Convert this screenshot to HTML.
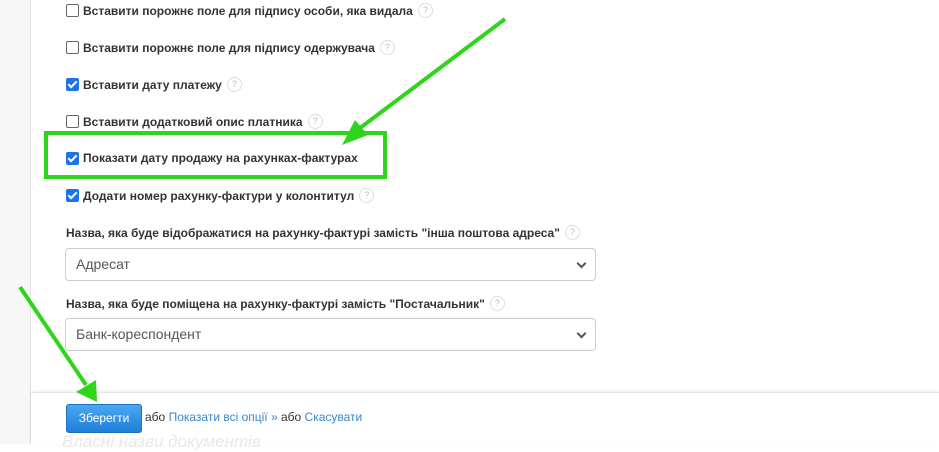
<!DOCTYPE html>
<html><head><meta charset="utf-8"><style>
body{margin:0;width:939px;height:444px;overflow:hidden;background:#fff;font-family:"Liberation Sans",Arial,sans-serif;position:relative}
.side{position:absolute;left:0;top:0;width:30px;height:444px;background:#f7f7f7;border-right:1px solid #e3e3e3}
.row{position:absolute;left:66px;font-size:12px;font-weight:bold;color:#333;white-space:nowrap;display:flex;align-items:center}
.cb{width:11px;height:11px;border:1px solid #666;border-radius:2px;margin-right:4px;background:#fff;display:inline-block;box-sizing:content-box}
.cb.on{background:#1a73e8;border-color:#1a73e8;position:relative}
.cb.on:after{content:"";position:absolute;left:3px;top:0px;width:3px;height:7px;border:solid #fff;border-width:0 2px 2px 0;transform:rotate(45deg)}
.q{display:inline-block;width:13px;height:13px;border:1px solid #ddd;border-radius:50%;font-size:9px;color:#bbb;text-align:center;line-height:13px;font-weight:normal;margin-left:5px}
.lbl{position:absolute;left:66px;font-size:12px;font-weight:bold;color:#333;white-space:nowrap;display:flex;align-items:center}
.sel{position:absolute;left:65px;width:531px;height:33px;border:1px solid #ccc;border-radius:4px;box-sizing:border-box;font-size:14px;color:#555;padding:0 0 0 10px;line-height:31px}
.sel:after{content:"";position:absolute;right:10px;top:11px;width:5px;height:5px;border:solid #555;border-width:0 2px 2px 0;transform:rotate(45deg)}
.foot{position:absolute;left:31px;top:392px;width:908px;height:52px;background:#fff;border-top:1px solid #e6e6e6;box-shadow:0 -1px 3px rgba(0,0,0,.08)}
.btn{position:absolute;left:66px;top:404px;width:76px;height:29px;border-radius:3px;background:linear-gradient(#4aa8f0,#1e7fd8);border:1px solid #1a6fc0;box-sizing:border-box;color:#fff;font-size:12px;text-align:center;line-height:27px}
.ft{position:absolute;left:145px;top:410px;font-size:12px;color:#333;white-space:nowrap}
.ft a{color:#3a86c8;text-decoration:none}
.ghost{position:absolute;left:62px;top:432px;font-size:17px;font-style:italic;color:#e8e8e8}
</style></head><body>
<div class="side"></div>
<div class="row" style="top:3px"><span class="cb"></span>Вставити порожнє поле для підпису особи, яка видала<span class="q">?</span></div>
<div class="row" style="top:40px"><span class="cb"></span>Вставити порожнє поле для підпису одержувача<span class="q">?</span></div>
<div class="row" style="top:77px"><span class="cb on"></span>Вставити дату платежу<span class="q">?</span></div>
<div class="row" style="top:114px"><span class="cb"></span>Вставити додатковий опис платника<span class="q">?</span></div>
<div class="row" style="top:151px"><span class="cb on"></span>Показати дату продажу на рахунках-фактурах</div>
<div class="row" style="top:188px"><span class="cb on"></span>Додати номер рахунку-фактури у колонтитул<span class="q">?</span></div>
<div class="lbl" style="top:225px">Назва, яка буде відображатися на рахунку-фактурі замість "інша поштова адреса"<span class="q">?</span></div>
<div class="sel" style="top:248px">Адресат</div>
<div class="lbl" style="top:296px">Назва, яка буде поміщена на рахунку-фактурі замість "Постачальник"<span class="q">?</span></div>
<div class="sel" style="top:318px">Банк-кореспондент</div>
<div class="foot"></div>
<div class="ghost">Власні назви документів</div>
<div class="btn">Зберегти</div>
<div class="ft">або <a>Показати всі опції »</a> або <a>Скасувати</a></div>
<svg width="939" height="444" style="position:absolute;left:0;top:0" fill="none">
<rect x="46" y="133" width="339" height="44" stroke="#2fd41c" stroke-width="4"/>
<line x1="505" y1="19" x2="360" y2="128" stroke="#2fd41c" stroke-width="4"/>
<polygon points="342,145 355,120 368,135" fill="#2fd41c"/>
<line x1="20" y1="287" x2="86" y2="385" stroke="#2fd41c" stroke-width="4"/>
<polygon points="97,402 76,392 96,380" fill="#2fd41c"/>
</svg>
</body></html>
